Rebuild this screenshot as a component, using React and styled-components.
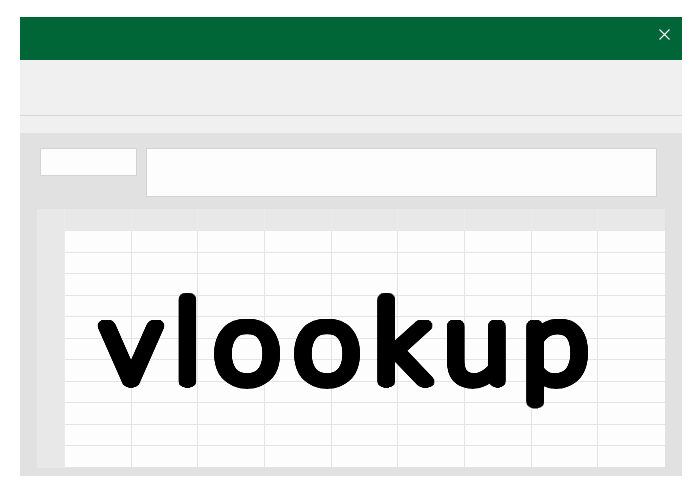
import React from "react";
import styled, { createGlobalStyle } from "styled-components";

const Global = createGlobalStyle`
  html, body { margin: 0; padding: 0; background: #ffffff; }
  body { font-family: "Liberation Sans", Arial, sans-serif; }
`;

const Page = styled.div`
  padding: 17px 0 0 20px;
`;

const Window = styled.div`
  width: 662px;
  display: flex;
  flex-direction: column;
`;

const TitleBar = styled.div`
  height: 43px;
  box-sizing: border-box;
  background: #006537;
  display: flex;
  align-items: flex-start;
  justify-content: flex-end;
  padding: 12px 12px 0 0;
`;

const CloseButton = styled.button`
  border: 0;
  background: transparent;
  padding: 0;
  width: 11px;
  height: 11px;
  display: flex;
  align-items: center;
  justify-content: center;
  cursor: pointer;
`;

const Ribbon = styled.div`
  height: 55px;
  background: #f0f0f0;
  border-bottom: 1px solid #d6d6d6;
`;

const Strip = styled.div`
  height: 17px;
  background: #f0f0f0;
`;

const Workspace = styled.div`
  background: #e1e1e1;
  padding: 15px 17px 8px;
  display: flex;
  flex-direction: column;
  gap: 12px;
`;

const FormulaRow = styled.div`
  display: flex;
  align-items: flex-start;
  gap: 9px;
  padding: 0 8px 0 3px;
`;

const Field = styled.div`
  background: #fdfdfd;
  border: 1px solid #d3d3d3;
  box-sizing: border-box;
  height: ${(p) => p.$h}px;
  ${(p) => (p.$w ? `width: ${p.$w}px;` : "flex: 1;")}
`;

const SheetWrap = styled.div`
  position: relative;
`;

const Sheet = styled.div`
  display: grid;
  grid-template-columns: 28px repeat(9, 1fr);
  grid-template-rows: 22px repeat(11, 1fr);
  height: 259px;
  background: #fdfdfd;
`;

const Cell = styled.div`
  box-sizing: border-box;
  background: ${(p) => (p.$head ? "#e8e8e8" : "#fdfdfd")};
  border-right: 1px solid ${(p) => (p.$head ? "#ebebeb" : "#e4e4e4")};
  border-bottom: 1px solid ${(p) => (p.$head ? "#e8e8e8" : "#e4e4e4")};
  ${(p) => p.$last && "border-right: 0;"}
`;

/* Round, heavy lettering: a light face thickened by rings of hard shadows */
const ring = (r, steps) =>
  Array.from({ length: steps }, (_, i) => {
    const a = (i / steps) * Math.PI * 2;
    return `${(Math.cos(a) * r).toFixed(2)}px ${(Math.sin(a) * r).toFixed(2)}px 0 #000`;
  });
const heavyShadow = [...ring(5.5, 40), ...ring(3.7, 28), ...ring(1.8, 16)].join(", ");

const Wordmark = styled.div`
  position: absolute;
  left: 64px;
  top: 72px;
  font-family: Lato, sans-serif;
  font-weight: 300;
  font-size: 114px;
  line-height: 1;
  letter-spacing: 12.5px;
  color: #000;
  text-shadow: ${heavyShadow};
  white-space: nowrap;
  transform: scaleX(1.05);
  transform-origin: left center;
  pointer-events: none;
`;

const COLS = 10;
const ROWS = 12;

export default function App() {
  const cells = [];
  for (let r = 0; r < ROWS; r++) {
    for (let c = 0; c < COLS; c++) {
      cells.push(
        <Cell key={`${r}-${c}`} $head={r === 0 || c === 0} $last={c === COLS - 1} />
      );
    }
  }
  return (
    <>
      <Global />
      <Page>
        <Window>
          <TitleBar>
            <CloseButton aria-label="Close">
              <svg width="11" height="11" viewBox="0 0 11 11">
                <path d="M0.5 0.5L10.5 10.5M10.5 0.5L0.5 10.5" stroke="#ffffff" strokeWidth="1.1" fill="none" />
              </svg>
            </CloseButton>
          </TitleBar>
          <Ribbon />
          <Strip />
          <Workspace>
            <FormulaRow>
              <Field $w={97} $h={28} />
              <Field $h={49} />
            </FormulaRow>
            <SheetWrap>
              <Sheet>{cells}</Sheet>
              <Wordmark>vlookup</Wordmark>
            </SheetWrap>
          </Workspace>
        </Window>
      </Page>
    </>
  );
}
